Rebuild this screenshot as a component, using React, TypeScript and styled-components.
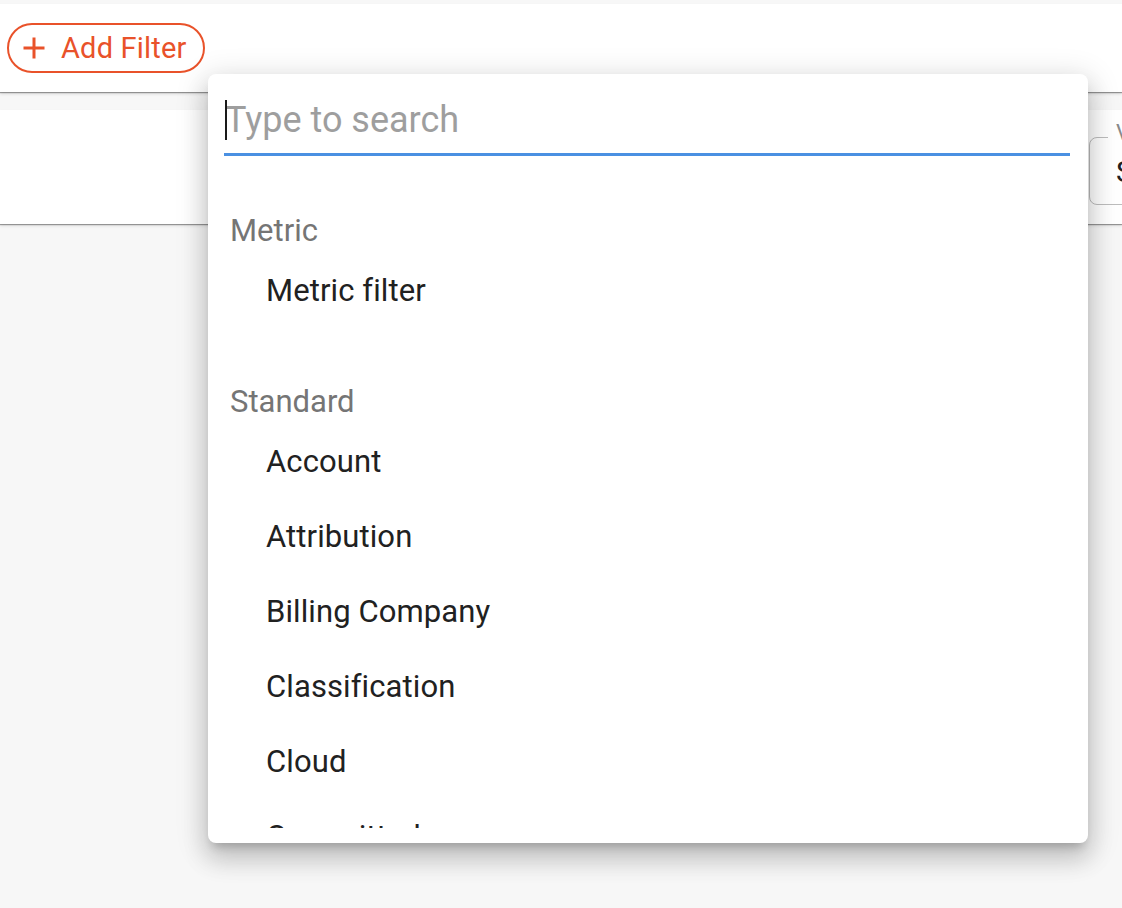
import React from "react";
import styled, { createGlobalStyle } from "styled-components";

const GlobalStyle = createGlobalStyle`
  html, body {
    margin: 0;
    padding: 0;
    background: #f7f7f7;
    font-family: Roboto, "Liberation Sans", Arial, sans-serif;
    overflow: hidden;
  }
  * { box-sizing: border-box; }
`;

const Page = styled.div`
  position: relative;
  width: 1122px;
  height: 908px;
  padding-top: 4px;
  background: #f7f7f7;
  overflow: hidden;
`;

const Header = styled.header`
  height: 88px;
  background: #ffffff;
  display: flex;
  align-items: center;
  padding-left: 7px;
  box-shadow: 0 1px 1px rgba(0, 0, 0, 0.35), 0 2px 3px rgba(0, 0, 0, 0.12);
  position: relative;
  z-index: 1;
`;

const AddButton = styled.button`
  height: 50px;
  width: 198px;
  border: 2px solid #e9522a;
  border-radius: 25px;
  background: #fff;
  color: #e9522a;
  display: flex;
  align-items: center;
  gap: 15px;
  padding: 0 0 0 13px;
  font-family: Roboto, "Liberation Sans", Arial, sans-serif;
  font-size: 29px;
  font-weight: 400;
  letter-spacing: 0.2px;
  white-space: nowrap;
  cursor: pointer;
`;

const Card = styled.section`
  margin-top: 18px;
  height: 114px;
  background: #ffffff;
  box-shadow: 0 1px 1px rgba(0, 0, 0, 0.35), 0 2px 3px rgba(0, 0, 0, 0.1);
  padding: 27px 0 0 1089px;
  display: flex;
  overflow: hidden;
`;

const OutlinedField = styled.div`
  position: relative;
  flex: 0 0 240px;
  height: 68px;
  border: 1.5px solid #bdbdbd;
  border-radius: 8px;
  display: flex;
  align-items: center;
  padding-left: 26px;
`;

const FieldLabel = styled.span`
  position: absolute;
  top: -17px;
  left: 18px;
  padding: 0 8px;
  background: #fff;
  font-size: 22px;
  color: #8a8a8a;
  line-height: 24px;
`;

const FieldValue = styled.span`
  font-size: 30px;
  color: #212121;
`;

const Popover = styled.div`
  position: absolute;
  left: 208px;
  top: 74px;
  width: 880px;
  height: 769px;
  background: #ffffff;
  border-radius: 8px;
  padding-bottom: 15px;
  display: flex;
  flex-direction: column;
  z-index: 10;
  box-shadow: 0 8px 10px -5px rgba(0, 0, 0, 0.2),
    0 16px 24px 2px rgba(0, 0, 0, 0.14), 0 6px 30px 5px rgba(0, 0, 0, 0.12);
`;

const SearchWrap = styled.div`
  position: relative;
  flex: none;
  padding: 16px 18px 0 16px;
`;

const SearchInput = styled.input`
  display: block;
  width: 100%;
  height: 66px;
  border: none;
  border-bottom: 3px solid #4a90e2;
  outline: none;
  padding: 0 0 4px 1px;
  font-family: Roboto, "Liberation Sans", Arial, sans-serif;
  font-size: 36px;
  color: #212121;
  caret-color: transparent;
  background: transparent;
  &::placeholder {
    color: #9e9e9e;
    opacity: 1;
  }
`;

const Caret = styled.span`
  position: absolute;
  left: 17px;
  top: 26px;
  width: 2px;
  height: 40px;
  background: #1a1a1a;
`;

const List = styled.div`
  flex: 1;
  min-height: 0;
  overflow: hidden;
  padding-top: 1px;
`;

const Group = styled.div`
  padding-top: 48px;
`;

const GroupLabel = styled.div`
  height: 48px;
  display: flex;
  align-items: center;
  padding: 2px 0 0 22px;
  font-size: 31px;
  color: #757575;
`;

const Item = styled.div`
  height: 75px;
  display: flex;
  align-items: center;
  padding-left: 58px;
  font-size: 31px;
  color: #212121;
  letter-spacing: 0.1px;
`;

const PlusIcon = () => (
  <svg width="24" height="24" viewBox="0 0 24 24" aria-hidden="true">
    <path
      d="M12 1.5v21M1.5 12h21"
      stroke="#e9522a"
      strokeWidth="3"
      strokeLinecap="butt"
      fill="none"
    />
  </svg>
);

const groups = [
  { label: "Metric", items: ["Metric filter"] },
  {
    label: "Standard",
    items: [
      "Account",
      "Attribution",
      "Billing Company",
      "Classification",
      "Cloud",
      "Committed",
    ],
  },
];

export default function App() {
  return (
    <>
      <GlobalStyle />
      <Page>
        <Header>
          <AddButton>
            <PlusIcon />
            Add Filter
          </AddButton>
        </Header>
        <Card>
          <OutlinedField>
            <FieldLabel>Value</FieldLabel>
            <FieldValue>Select</FieldValue>
          </OutlinedField>
        </Card>
        <Popover>
          <SearchWrap>
            <SearchInput placeholder="Type to search" />
            <Caret />
          </SearchWrap>
          <List>
            {groups.map((g) => (
              <Group key={g.label}>
                <GroupLabel>{g.label}</GroupLabel>
                {g.items.map((it) => (
                  <Item key={it}>{it}</Item>
                ))}
              </Group>
            ))}
          </List>
        </Popover>
      </Page>
    </>
  );
}
